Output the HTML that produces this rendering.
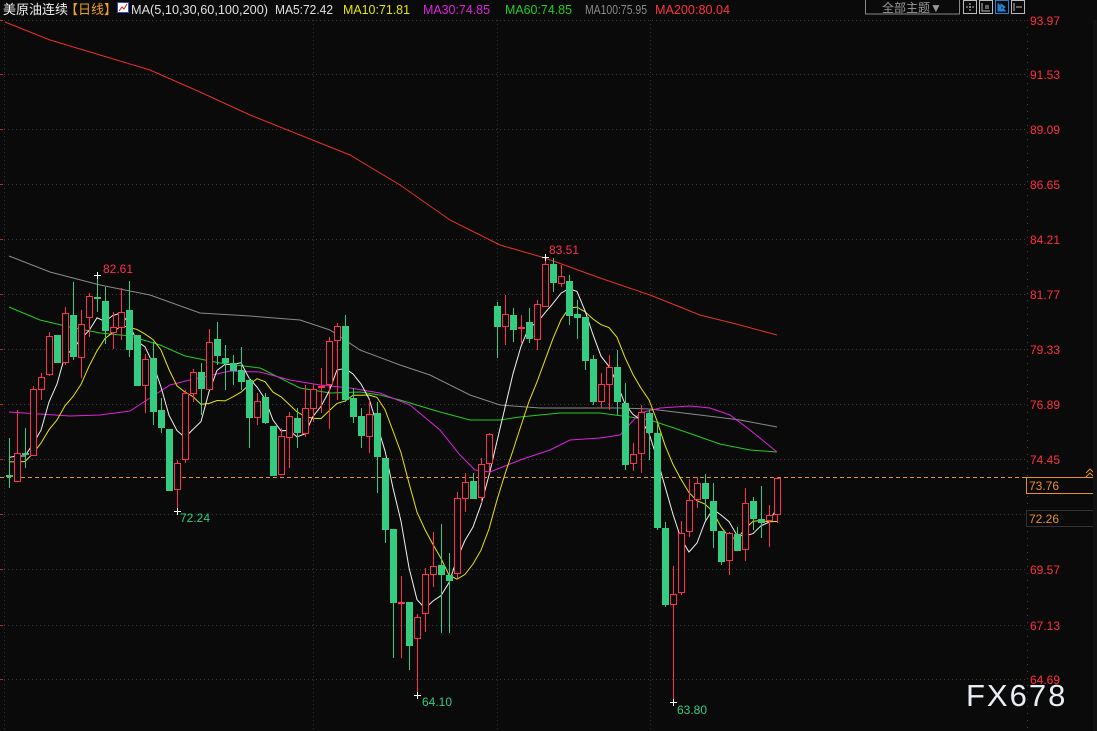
<!DOCTYPE html>
<html><head><meta charset="utf-8"><style>
body{margin:0;background:#0a0a0a;width:1097px;height:731px;overflow:hidden;font-family:"Liberation Sans","Noto Sans CJK SC",sans-serif}
svg{position:absolute;left:0;top:0}
</style></head><body>
<svg id="s" width="1097" height="731" xmlns="http://www.w3.org/2000/svg" font-family="Liberation Sans, Noto Sans CJK SC, sans-serif"></svg>
<script>
var D=[[475,477,438,488,0],[453,481,410,481,1],[453,455,428,468,0],[389,455,386,455,1],[377,389,373,400,1],[336,374,332,376,1],[335,363,335,363,0],[313,362,307,365,1],[315,357,282,360,0],[324,357,310,378,1],[296,317,293,337,1],[297,299,276,312,0],[301,331,287,344,0],[327,332,312,349,1],[312,327,288,340,1],[310,350,281,357,0],[335,386,335,386,0],[359,385,354,413,1],[358,412,342,425,0],[410,428,398,433,0],[429,491,429,491,0],[463,489,460,510,1],[393,459,390,463,1],[372,393,369,402,1],[372,389,363,415,0],[342,389,329,390,1],[339,356,322,365,0],[358,363,345,390,0],[363,371,355,385,0],[370,382,347,390,0],[380,418,378,448,0],[401,417,393,425,1],[397,423,393,424,0],[426,476,426,476,0],[436,474,428,474,1],[416,437,412,468,1],[418,433,408,448,0],[408,433,385,437,1],[389,408,384,422,1],[386,387,368,413,1],[341,384,337,429,1],[326,340,323,400,1],[326,400,315,402,0],[398,417,388,423,0],[416,436,408,448,0],[414,436,400,453,1],[413,457,402,493,0],[458,530,458,543,0],[529,603,529,658,0],[602,603,576,658,1],[602,646,602,670,0],[617,638,614,695,1],[574,613,568,632,1],[566,574,532,587,1],[565,575,524,633,0],[575,581,553,633,0],[498,573,492,578,1],[482,498,473,512,1],[481,499,473,499,0],[464,497,458,503,1],[434,463,433,473,1],[306,327,302,358,0],[314,326,295,345,1],[315,330,308,342,0],[327,328,315,343,1],[322,339,308,343,0],[304,339,300,350,1],[264,306,256,307,1],[264,283,258,292,0],[276,283,265,287,1],[281,316,275,325,0],[314,318,300,339,0],[317,361,317,370,0],[359,402,355,405,0],[384,401,373,408,1],[367,384,355,410,1],[367,402,350,415,0],[403,465,383,470,0],[454,463,443,471,1],[412,453,405,473,1],[413,433,410,460,0],[433,528,423,530,0],[528,605,522,607,0],[594,604,566,702,1],[533,592,521,595,1],[500,531,479,537,1],[483,499,477,508,1],[483,499,474,520,0],[501,531,483,548,0],[531,562,531,565,0],[533,560,532,575,1],[534,551,527,551,0],[503,549,488,561,1],[501,519,497,530,0],[519,523,486,538,0],[515,520,505,547,1],[478,514,477,523,1]];
var o='';
function X(i){return 9+8*i}
var gy=[20,74,129,184,239,294,349,404,459,514,569,625,679];
gy.forEach(function(y){o+='<line x1="0" y1="'+(y+.5)+'" x2="1027" y2="'+(y+.5)+'" stroke="#3a3a3a" stroke-dasharray="1,3"/>';o+='<line x1="0" y1="'+(y+.5)+'" x2="3" y2="'+(y+.5)+'" stroke="#c22"/>';});
[4,313,497,650].forEach(function(x){o+='<line x1="'+(x+.5)+'" y1="20" x2="'+(x+.5)+'" y2="731" stroke="#333" stroke-dasharray="1,3"/>';});
o+='<line x1="1027.5" y1="20" x2="1027.5" y2="731" stroke="#444" stroke-dasharray="1,6"/>';
o+='<line x1="0" y1="477.5" x2="1027" y2="477.5" stroke="#e8902a" stroke-dasharray="4,3"/>';
function pl(pts,c){o+='<polyline fill="none" stroke="'+c+'" stroke-width="1" points="'+pts.map(function(p){return p.join(',')}).join(' ')+'"/>';}
pl([[5,22],[50,40],[100,55],[150,70],[200,92],[250,115],[300,135],[350,155],[400,185],[450,220],[500,245],[545,258],[600,278],[650,295],[700,315],[740,325],[777,335]],'#e8302a');
pl([[9,256],[50,272],[100,285],[150,295],[200,313],[250,316],[300,320],[330,330],[360,350],[400,365],[430,375],[470,395],[500,405],[540,408],[580,408],[620,408],[650,409],[700,415],[740,420],[777,427]],'#8a8a8a');
pl([[9,307],[40,320],[70,327],[100,333],[130,336],[160,345],[185,356],[220,363],[260,368],[300,388],[330,393],[360,392],[380,395],[400,400],[440,412],[470,420],[500,420],[520,417],[560,413],[600,413],[630,417],[650,420],[680,430],[700,437],[720,444],[750,450],[777,452]],'#22cc22');
pl([[9,412],[40,414],[70,416],[100,415],[130,411],[150,398],[170,385],[190,380],[230,371],[260,372],[290,380],[320,385],[350,388],[380,393],[410,405],[440,430],[460,455],[475,470],[490,472],[520,460],[550,450],[570,440],[600,438],[620,435],[640,413],[660,408],[690,406],[710,408],[730,415],[750,430],[777,452]],'#dd22dd');
var C=D.map(function(d){return d[4]?d[0]:d[1]});
var pre10=[440,450,460,470,480,470,460,455,450,445];
function ma(n,c){var pts=[];for(var i=0;i<D.length;i++){var s=0;for(var k=0;k<n;k++){var j=i-k;s+=j>=0?C[j]:pre10[(j%10+10)%10];}pts.push([X(i),(s/n).toFixed(1)]);}pl(pts,c);}
ma(10,'#e6e600');ma(5,'#f0f0f0');
D.forEach(function(d,i){var x=X(i);var col=d[4]?'#ff3050':'#33cc80';
o+='<line x1="'+(x+.5)+'" y1="'+d[2]+'" x2="'+(x+.5)+'" y2="'+d[3]+'" stroke="'+col+'"/>';
var h=Math.max(1,d[1]-d[0]);
if(d[4])o+='<rect x="'+(x-2.5)+'" y="'+(d[0]+.5)+'" width="6" height="'+h+'" fill="#0a0a0a" stroke="'+col+'"/>';
else o+='<rect x="'+(x-3)+'" y="'+d[0]+'" width="7" height="'+h+'" fill="'+col+'"/>';});
function cross(x,y){o+='<path d="M'+(x-3)+' '+(y+.5)+'h7M'+(x+.5)+' '+(y-3)+'v7" stroke="#fff"/>';}
cross(97,275);cross(545,257);cross(177,511);cross(417,695);cross(673,702);
function t(x,y,s,c,fs,extra){o+='<text x="'+x+'" y="'+y+'" fill="'+c+'" font-size="'+(fs||12)+'" '+(extra||'')+'>'+s+'</text>';}
t(103,273,'82.61','#ff3050');t(549,254,'83.51','#ff3050');t(180,522,'72.24','#33cc80');t(422,706,'64.10','#33cc80');t(677,714,'63.80','#33cc80');
[['93.97',20],['91.53',74],['89.09',129],['86.65',184],['84.21',239],['81.77',294],['79.33',349],['76.89',404],['74.45',459],['69.57',569],['67.13',625],['64.69',679]].forEach(function(a){t(1030,a[1]+5,a[0],'#ff3040');});
o+='<rect x="1026.5" y="477.5" width="67" height="16" fill="#0a0a0a" stroke="#e8902a"/>';t(1029,490,'73.76','#e8902a');
o+='<rect x="1026.5" y="510.5" width="67" height="16" fill="#0a0a0a" stroke="#333"/>';t(1029,523,'72.26','#e8902a');
o+='<path d="M1086 473l4-4 4 4M1086 477l4-4 4 4" stroke="#e8902a" fill="none"/>';
o+='<rect x="1093" y="20" width="4" height="711" fill="#111"/>';
t(3,14,'美原油连续','#f0f0f0',13);t(65,14,'【日线】','#f0a020',13);
o+='<rect x="117.5" y="2.5" width="11" height="10" fill="#fff" stroke="#3050c0"/><path d="M119 11l3-4 2 2 3-5" stroke="#d02020" fill="none"/>';
var hs='font-size="13" textLength';
o+='<text x="131" y="14" fill="#e0e0e0" font-size="13" textLength="137" lengthAdjust="spacingAndGlyphs">MA(5,10,30,60,100,200)</text>';
o+='<text x="275" y="14" fill="#e0e0e0" font-size="13" textLength="58" lengthAdjust="spacingAndGlyphs">MA5:72.42</text>';
o+='<text x="343" y="14" fill="#e6e600" font-size="13" textLength="67" lengthAdjust="spacingAndGlyphs">MA10:71.81</text>';
o+='<text x="423" y="14" fill="#dd22dd" font-size="13" textLength="67" lengthAdjust="spacingAndGlyphs">MA30:74.85</text>';
o+='<text x="505" y="14" fill="#22cc22" font-size="13" textLength="67" lengthAdjust="spacingAndGlyphs">MA60:74.85</text>';
o+='<text x="585" y="14" fill="#8a8a8a" font-size="13" textLength="62" lengthAdjust="spacingAndGlyphs">MA100:75.95</text>';
o+='<text x="655" y="14" fill="#ff3040" font-size="13" textLength="75" lengthAdjust="spacingAndGlyphs">MA200:80.04</text>';
o+='<rect x="865.5" y="-1" width="94" height="15" fill="#0a0a0a" stroke="#888"/>';t(882,12,'全部主题▼','#999',12);
[963,979,995,1011].forEach(function(x,i){o+='<rect x="'+(x+.5)+'" y=".5" width="13" height="13" fill="none" stroke="'+(i==2?'#2a80d0':'#bbb')+'"/>';});
o+='<path d="M970 3v8M966 7h8" stroke="#bbb" stroke-dasharray="2,1"/><path d="M982 3v8h8M986 5v4M988 5v4" stroke="#bbb" fill="none"/><path d="M998 3v8h8M1001 4l4 3-4 3z" stroke="#2a80d0" fill="#2a80d0"/><path d="M1014 3v8M1016 7h6" stroke="#bbb"/>';
t(966,706,'FX678','#e8eef4',31,'letter-spacing="2"');
document.getElementById('s').innerHTML=o;
</script>
</body></html>
